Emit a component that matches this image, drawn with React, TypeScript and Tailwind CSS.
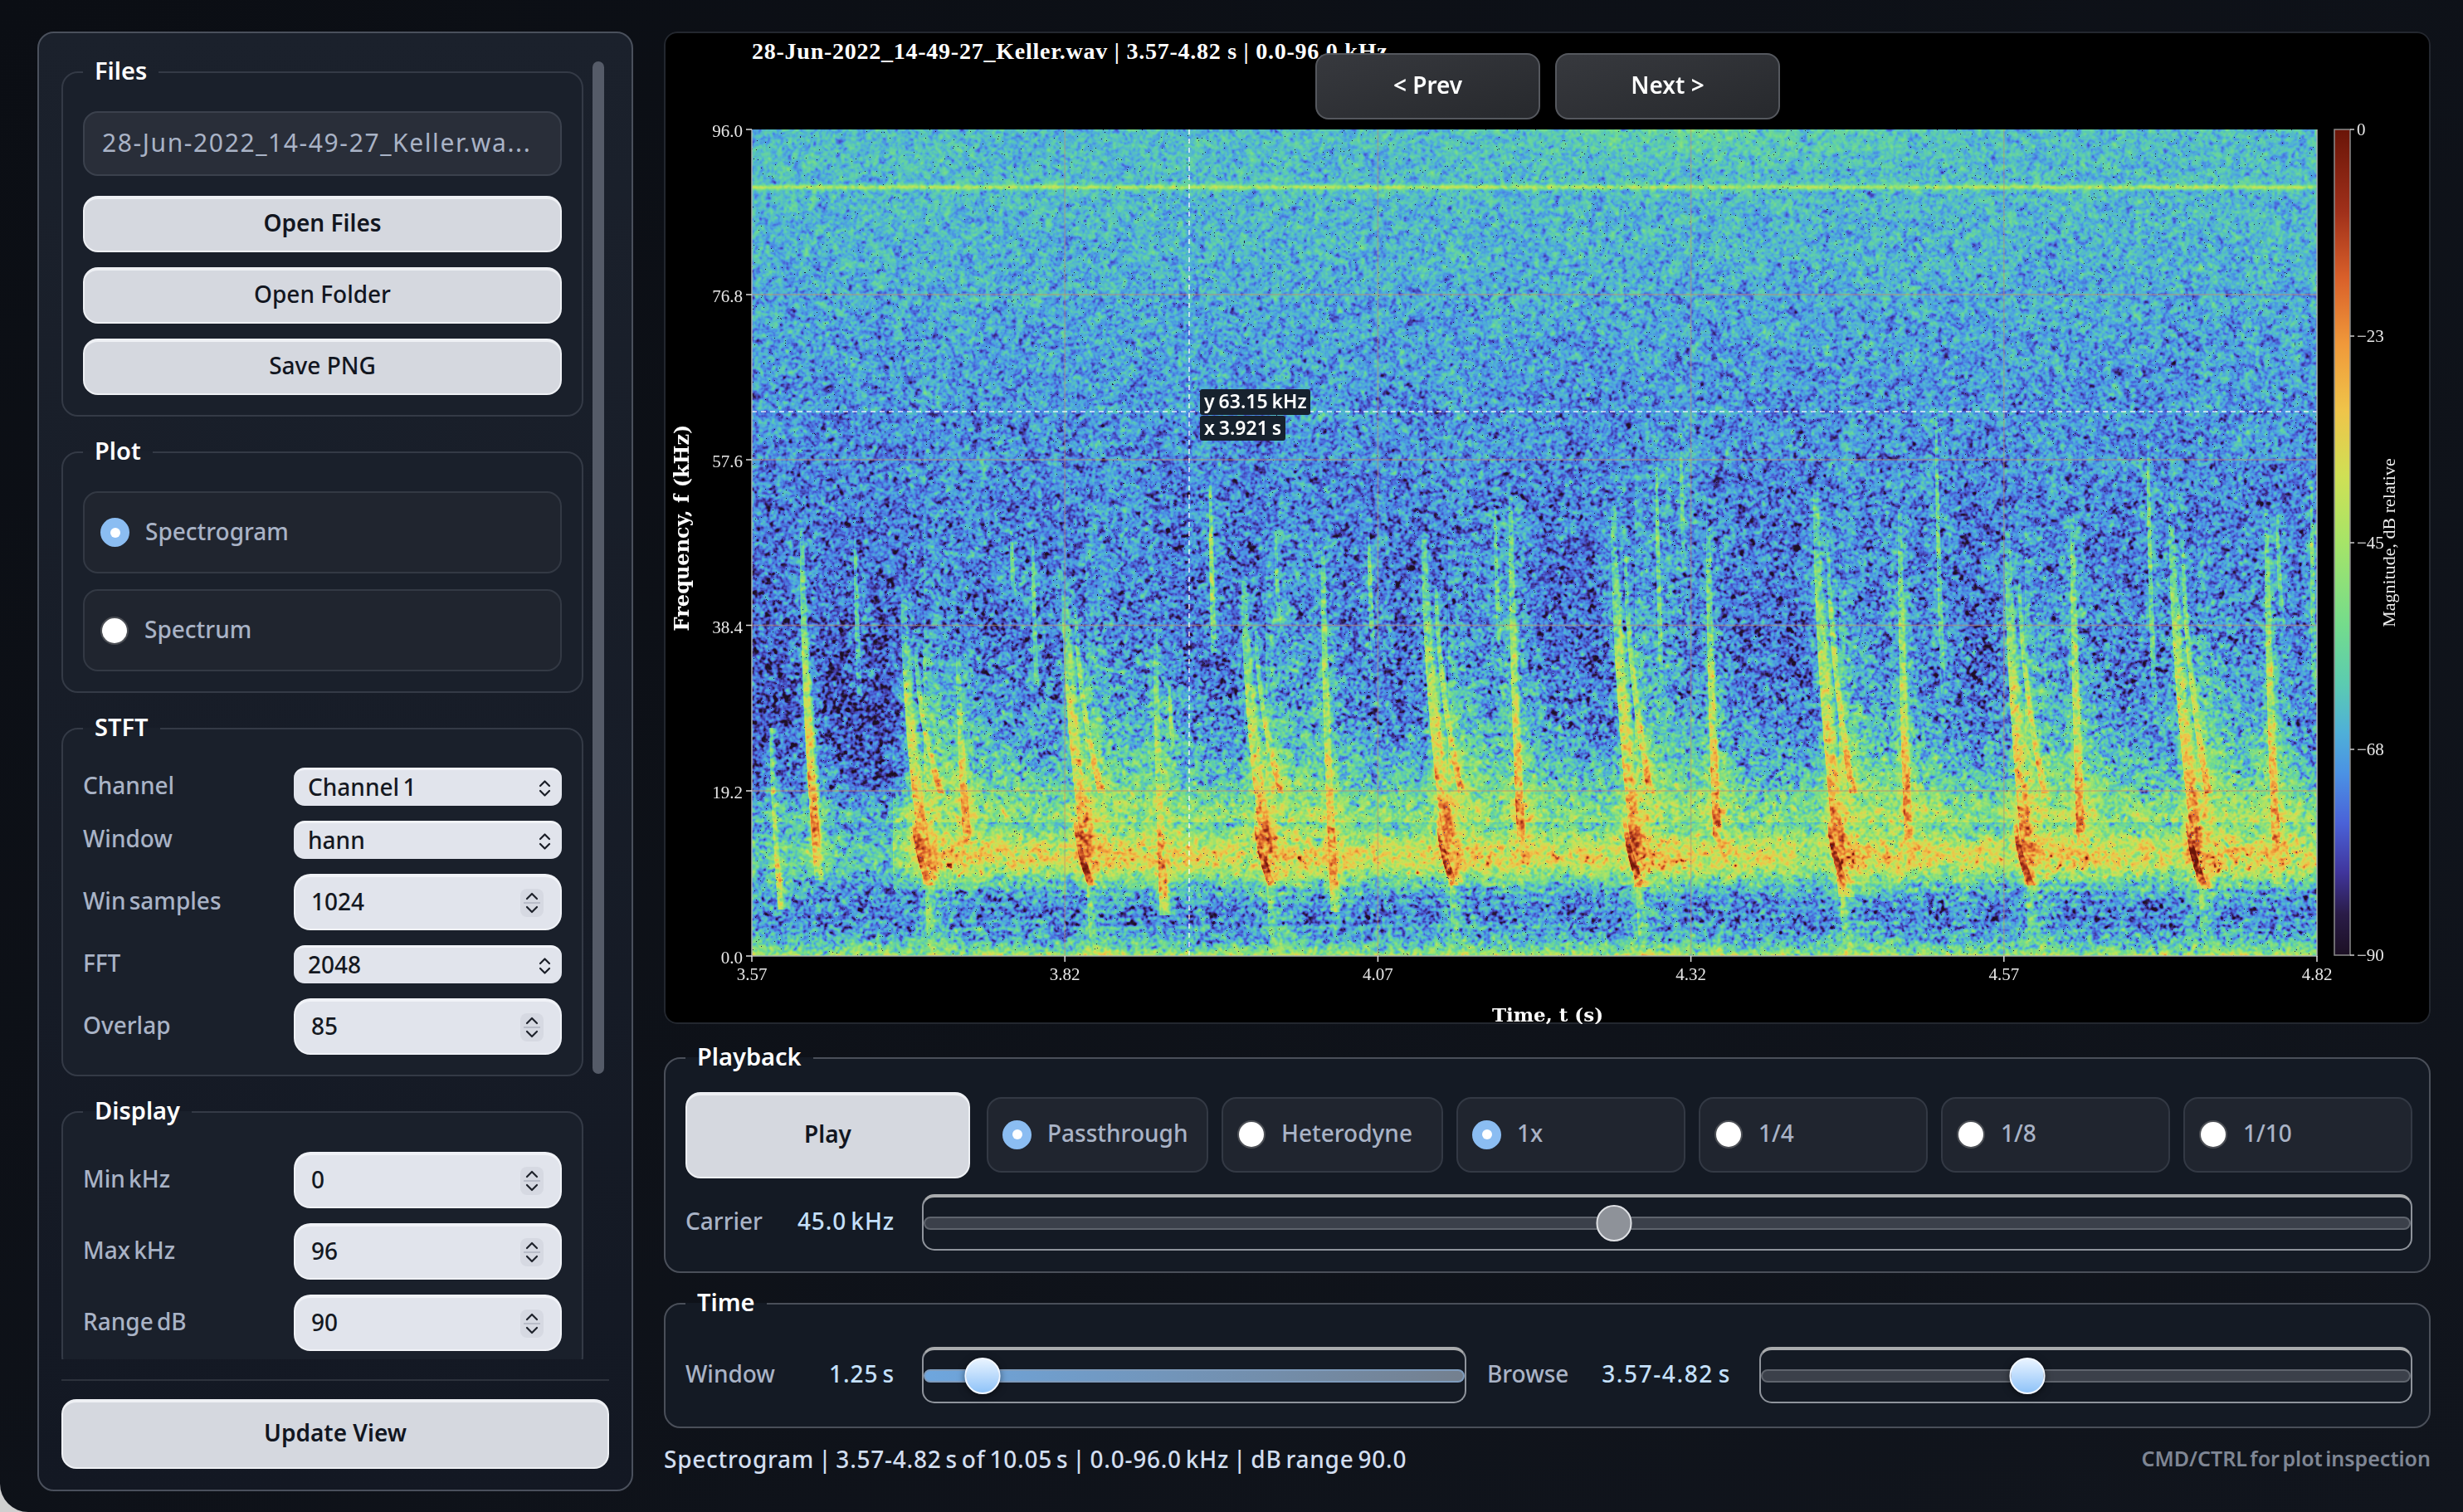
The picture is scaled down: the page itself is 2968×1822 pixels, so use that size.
import React, { useEffect, useRef } from 'react';

const W = 1886;
const H = 996;

// plot corners inside the black panel (panel sits at 800,38 on the page)
const PX = 106;
const PY = 118;

const COLORS: [number, string][] = [
  [0, '#1c1024'],
  [0.05, '#2a1c48'],
  [0.1, '#40359c'],
  [0.16, '#4a62d8'],
  [0.22, '#4b92e4'],
  [0.27, '#4fb0d8'],
  [0.33, '#5cccb0'],
  [0.4, '#74dc8c'],
  [0.5, '#a6e468'],
  [0.58, '#cfe055'],
  [0.66, '#efc44a'],
  [0.74, '#f0993a'],
  [0.82, '#d9602a'],
  [0.9, '#a0301a'],
  [1, '#6a1508'],
];

const hexRgb = (h: string) => [parseInt(h.slice(1, 3), 16), parseInt(h.slice(3, 5), 16), parseInt(h.slice(5, 7), 16)];

const buildLut = () => {
  const lut = new Uint8Array(1024 * 3);
  for (let i = 0; i < 1024; i++) {
    const t = i / 1023;
    let k = 0;
    while (k < COLORS.length - 2 && COLORS[k + 1][0] < t) k++;
    const [t0, c0] = COLORS[k];
    const [t1, c1] = COLORS[k + 1];
    const u = Math.min(1, Math.max(0, (t - t0) / (t1 - t0)));
    const a = hexRgb(c0);
    const b = hexRgb(c1);
    for (let c = 0; c < 3; c++) lut[i * 3 + c] = a[c] + (b[c] - a[c]) * u;
  }
  return lut;
};

const makeRng = (seed: number) => () => {
  seed |= 0;
  seed = (seed + 0x6d2b79f5) | 0;
  let t = Math.imul(seed ^ (seed >>> 15), 1 | seed);
  t = (t + Math.imul(t ^ (t >>> 7), 61 | t)) ^ t;
  return ((t ^ (t >>> 14)) >>> 0) / 4294967296;
};

const boxBlur = (a: Float32Array, r: number, passes: number) => {
  const b = new Float32Array(W * H);
  const win = r * 2 + 1;
  for (let pass = 0; pass < passes; pass++) {
    for (let y = 0; y < H; y++) {
      let s = 0;
      const o = y * W;
      for (let x = -r; x <= r; x++) s += a[o + Math.max(0, x)];
      for (let x = 0; x < W; x++) {
        b[o + x] = s / win;
        s += a[o + Math.min(W - 1, x + r + 1)] - a[o + Math.max(0, x - r)];
      }
    }
    for (let x = 0; x < W; x++) {
      let s = 0;
      for (let y = -r; y <= r; y++) s += b[Math.max(0, y) * W + x];
      for (let y = 0; y < H; y++) {
        a[y * W + x] = s / win;
        s += b[Math.min(H - 1, y + r + 1) * W + x] - b[Math.max(0, y - r) * W + x];
      }
    }
  }
  return a;
};

const blurred = (rng: () => number, r: number) => {
  const a = new Float32Array(W * H);
  for (let i = 0; i < a.length; i++) a[i] = rng() - 0.5;
  boxBlur(a, r, 2);
  let sum = 0;
  for (let i = 0; i < a.length; i++) sum += a[i] * a[i];
  const std = Math.sqrt(sum / a.length);
  for (let i = 0; i < a.length; i++) a[i] /= std;
  return a;
};

const piecewise = (pts: number[][], v: number) => {
  if (v <= pts[0][0]) return pts[0][1];
  for (let i = 1; i < pts.length; i++) {
    if (v <= pts[i][0]) {
      const u = (v - pts[i - 1][0]) / (pts[i][0] - pts[i - 1][0]);
      return pts[i - 1][1] + (pts[i][1] - pts[i - 1][1]) * u;
    }
  }
  return pts[pts.length - 1][1];
};

const even = (lv: number[], s: number) => {
  const p = Math.min(0.9999, Math.max(0, s)) * (lv.length - 1);
  const i = Math.floor(p);
  return lv[i] + (lv[i + 1] - lv[i]) * (p - i);
};

const FLOOR = [
  [0, 0.3], [60, 0.295], [150, 0.28], [300, 0.24], [400, 0.215], [500, 0.19], [600, 0.16],
  [720, 0.135], [800, 0.14], [860, 0.19], [900, 0.24], [950, 0.21], [975, 0.28], [990, 0.41], [996, 0.54],
];

// call tracks, in page pixels: xTop, yTop, xBottom, yBottom
const MAIN = [
  [1086, 720, 1113, 1065, 0.85],
  [1279, 680, 1308, 1060, 0.9],
  [1496, 700, 1525, 1060, 0.9],
  [1713, 650, 1745, 1062, 0.92],
  [1941, 610, 1970, 1068, 0.95],
  [2185, 590, 2216, 1080, 0.95],
  [2416, 640, 2440, 1065, 0.92],
  [2613, 600, 2648, 1070, 1],
];
const STRONG = [
  [964, 640, 982, 1059], [1152, 774, 1162, 1031], [1390, 758, 1398, 1102], [1592, 660, 1604, 1098],
  [1818, 601, 1830, 1047], [2056, 622, 2066, 1047], [2287, 618, 2296, 1039], [2495, 622, 2504, 1047],
  [2729, 618, 2740, 1064],
];
const THIN = [
  [1029, 640, 1033, 838, 0.36], [1112, 774, 1116, 880, 0.36], [1217, 640, 1219, 716, 0.38], [1243, 640, 1248, 860, 0.36],
  [1408, 826, 1412, 916, 0.46], [1457, 585, 1460, 786, 0.48], [1536, 640, 1540, 776, 0.38], [1648, 640, 1652, 790, 0.42],
  [1800, 610, 1806, 800, 0.38], [1995, 563, 2000, 837, 0.44], [2024, 520, 2028, 720, 0.35], [2332, 500, 2340, 858, 0.42],
  [2587, 525, 2594, 860, 0.42], [2743, 620, 2748, 760, 0.4], [2784, 587, 2786, 850, 0.4],
];

const drawSpectrogram = (canvas: HTMLCanvasElement) => {
  const ctx = canvas.getContext('2d');
  if (!ctx) return;
  const rng = makeRng(20220628);
  const coarse = blurred(rng, 2);
  const fine = blurred(rng, 1);
  const n1 = new Float32Array(W * H);
  for (let i = 0; i < n1.length; i++) n1[i] = 0.55 * coarse[i] + 0.7 * fine[i];
  const ridge = new Float32Array(W * H);

  const stamp = (x0: number, y0: number, x1: number, y1: number, w0: number, w1: number, plat: number, lv: number[]) => {
    const top = Math.max(0, Math.round(y0 - 156));
    const bot = Math.min(H - 1, Math.round(y1 - 156));
    for (let y = top; y <= bot; y++) {
      const s = (y - top) / Math.max(1, bot - top);
      // sweeps run almost upright at the top and lean over near the bottom
      const cx = x0 - 906 + (x1 - x0) * Math.pow(s, 1.8);
      const lev = even(lv, s);
      const wid = w0 + (w1 - w0) * s;
      const pl = plat * (0.4 + 0.6 * s);
      const xa = Math.max(0, Math.floor(cx - 5));
      const xb = Math.min(W - 1, Math.ceil(cx + pl + wid * 4));
      for (let x = xa; x <= xb; x++) {
        const dx = x - cx;
        const r = lev * (dx < 0 ? Math.exp(-(dx * dx) / 3) : dx < pl ? 1 : Math.exp(-(dx - pl) / wid));
        const i = y * W + x;
        if (r > ridge[i]) ridge[i] = r;
      }
    }
  };

  for (const [x0, y0, x1, y1, k] of MAIN) {
    stamp(x0 + 6, y0 + 130, x1 + 4, y1, 14, 66, 0, [0.34, 0.42, 0.47, 0.52]);
    stamp(x0, y0, x1, y1, 4, 20, 13, [0.3, 0.34, 0.42, 0.5, 0.56, 0.6, 0.68, 0.8, 0.62]);
    stamp(x0 + 16, y0 + 60, x0 + 44, 955, 3, 10, 6, [0.32, 0.42, 0.5, 0.58, 0.74]);
    stamp(x1 + 2, y1 - 5, x1 + 6, 1150, 14, 14, 8, [0.5, 0.42, 0.39, 0.41]);
    // dark core at the bottom of the sweep
    stamp(x1 - 14, 985, x1 + 3, 1066, 5, 7, 8, [0.55, 0.8, 0.95 * k, 0.98 * k, 0.7]);
    // reverberant tail around 11 kHz
    for (let y = 1000 - 156; y < 1070 - 156; y++) {
      const dy = (y - (1036 - 156)) / 26;
      for (let x = Math.max(0, x1 - 906); x < Math.min(W, x1 - 906 + 200); x++) {
        const dx = x - (x1 - 906);
        const lev = (0.4 + 0.34 * k * Math.exp(-dx / 45)) * Math.exp(-dy * dy) + 0.1 * n1[y * W + x];
        const i = y * W + x;
        if (lev > ridge[i]) ridge[i] = lev;
      }
    }
  }
  for (const [x0, y0, x1, y1] of STRONG) {
    stamp(x0, y0, x1, y1, 4, 8, 9, [0.32, 0.38, 0.43, 0.48, 0.54, 0.6, 0.7, 0.76, 0.48]);
  }
  stamp(928, 877, 938, 1095, 6, 8, 5, [0.36, 0.42, 0.46, 0.5, 0.56, 0.66, 0.5]);
  for (const [x0, y0, x1, y1, l] of THIN) {
    stamp(x0, y0, x1, y1, 2.5, 3.5, 5, [l * 0.75, l, l, l * 0.9, l * 0.65]);
  }

  const halo = boxBlur(ridge.slice(), 10, 2);

  const lut = buildLut();
  const img = ctx.createImageData(W, H);
  const mains = MAIN.map((m) => m[2] - 906);
  const px = img.data;
  for (let y = 0; y < H; y++) {
    const base = piecewise(FLOOR, y);
    const amp = 0.038 + 0.032 * Math.min(1, y / 650);
    const dyBand = y - 875;
    const g = Math.exp(-(dyBand * dyBand) / (dyBand < 0 ? 2500 : 900));
    for (let x = 0; x < W; x++) {
      let last = -1;
      for (let m = 0; m < mains.length; m++) if (mains[m] <= x) last = mains[m];
      const e = last < 0 ? 0 : Math.exp(-(x - last) / 150);
      const a = x < 170 ? 0.35 : 1;
      const bandLevel = a === 1 ? 0.47 + 0.06 * e : 0.33;
      let l = base + (bandLevel - base) * g;
      const d = 835 - y;
      if (d > 0) {
        const g2 = Math.exp(-d / (40 + 150 * e));
        l += (0.46 - l) * g2 * a;
      }
      if (y > 905 && y < 968) l += 0.035 * Math.sin(y * 0.62 + x * 0.004) * (0.4 + e);
      if (y < 60) {
        const dx = (x - 1160) / 220;
        l += 0.06 * Math.exp(-dx * dx) * (1 - y / 60);
      }
      const ly = y - 69;
      l += 0.22 * Math.exp(-(ly * ly) / 8);
      const i = y * W + x;
      l += 0.3 * halo[i];
      let n = n1[i];
      if (n < 0) n *= 1.3;
      l += n * amp;
      const r = ridge[i] + 0.07 * n;
      if (r > l) l = r;
      const u = rng();
      if (u < 0.005) l *= 0.12;
      const c = Math.round(Math.min(1, Math.max(0, l)) * 1023) * 3;
      const o = i * 4;
      px[o] = lut[c];
      px[o + 1] = lut[c + 1];
      px[o + 2] = lut[c + 2];
      px[o + 3] = 255;
    }
  }
  ctx.putImageData(img, 0, 0);
};

const Group: React.FC<{ title: string; className?: string; children: React.ReactNode }> = ({ title, className = '', children }) => (
  <fieldset className={`rounded-[20px] border-2 border-[#343a46] ${className}`}>
    <legend className="px-[14px] pb-[4px] text-[29px] leading-[24px] font-semibold text-white">{title}</legend>
    {children}
  </fieldset>
);

const LightButton: React.FC<{ label: string; bold?: boolean; className?: string }> = ({ label, bold, className = '' }) => (
  <button className={`rounded-[18px] border-2 border-t-[4px] border-[#eef0f4] bg-[#d5d8df] pb-[6px] text-[28px] text-[#12161f] ${bold ? 'font-semibold' : 'font-medium'} ${className}`}>
    {label}
  </button>
);

const Chevrons = () => (
  <svg width="15" height="22" viewBox="0 0 15 22" fill="none" stroke="#1a1e27" strokeWidth="2.2" strokeLinecap="round" strokeLinejoin="round">
    <path d="M2 8 L7.5 2.5 L13 8" />
    <path d="M2 14 L7.5 19.5 L13 14" />
  </svg>
);

const Label: React.FC<{ text: string }> = ({ text }) => <span className="pb-[4px] text-[28px] font-medium text-[#a9b3c6]">{text}</span>;

const SelectRow: React.FC<{ label: string; value: string }> = ({ label, value }) => (
  <div className="flex items-center justify-between">
    <Label text={label} />
    <div className="flex h-[46px] w-[323px] items-center justify-between rounded-[13px] border-t-[3px] border-[#f1f3f8] bg-[#e1e4ec] pr-[13px] pl-[17px] text-[28px] font-medium text-[#141821]">
      <span className="pb-[4px]">{value}</span>
      <Chevrons />
    </div>
  </div>
);

const NumberRow: React.FC<{ label: string; value: string }> = ({ label, value }) => (
  <div className="flex items-center justify-between">
    <Label text={label} />
    <div className="flex h-[68px] w-[323px] items-center justify-between rounded-[20px] border-2 border-t-[4px] border-[#f0f2f7] bg-[#e1e4ec] pr-[20px] pl-[19px] text-[28px] font-medium text-[#141821]">
      <span className="pb-[4px]">{value}</span>
      <div className="flex h-[34px] w-[28px] flex-col items-center justify-between rounded-[8px] bg-[#d6d9e2] py-[4px]">
        <svg width="16" height="10" viewBox="0 0 16 10" fill="none" stroke="#1f232c" strokeWidth="2.2" strokeLinecap="round" strokeLinejoin="round">
          <path d="M2 8 L8 2 L14 8" />
        </svg>
        <div className="h-[2px] w-[20px] bg-[#b8bcc8]" />
        <svg width="16" height="10" viewBox="0 0 16 10" fill="none" stroke="#1f232c" strokeWidth="2.2" strokeLinecap="round" strokeLinejoin="round">
          <path d="M2 2 L8 8 L14 2" />
        </svg>
      </div>
    </div>
  </div>
);

const Radio: React.FC<{ on?: boolean }> = ({ on }) =>
  on ? (
    <span className="flex h-[35px] w-[35px] shrink-0 items-center justify-center rounded-full bg-[#8bbdf2]">
      <span className="h-[12px] w-[12px] rounded-full bg-white" />
    </span>
  ) : (
    <span className="h-[34px] w-[34px] shrink-0 rounded-full border-2 border-[#4c4f55] bg-white" />
  );

const RadioCard: React.FC<{ label: string; on?: boolean; className?: string; pad?: string }> = ({ label, on, className = '', pad = 'pl-[17px]' }) => (
  <div className={`flex items-center gap-[19px] rounded-[18px] border-2 border-[#333944] bg-[#20252f] ${pad} ${className}`}>
    <Radio on={on} />
    <span className="pb-[4px] text-[28px] font-medium text-[#a9b3c6]">{label}</span>
  </div>
);

const Slider: React.FC<{ pos: number; className?: string; tone: 'gray' | 'blue'; filled?: boolean }> = ({ pos, className = '', tone, filled }) => (
  <div className={`relative flex h-[68px] items-center rounded-[15px] border-2 border-t-[4px] border-[#8f949c] border-t-[#a9abad] ${className}`}>
    <div className={`h-[16px] w-full rounded-full border-2 ${filled ? 'border-[#7f9cbd] bg-gradient-to-r from-[#6ea6de] to-[#74808f]' : 'border-[#5f646d] bg-[#3b404a]'}`} />
    <div
      className={`absolute top-[9px] h-[44px] w-[43px] -translate-x-1/2 rounded-full border-2 ${
        tone === 'blue'
          ? 'border-[#f2f7ff] bg-gradient-to-b from-[#e8f3ff] to-[#8fc3f8] shadow-[0_2px_8px_rgba(0,0,0,0.5)]'
          : 'border-[#dfe1e5] bg-[#8e9299]'
      }`}
      style={{ left: pos }}
    />
  </div>
);

const YTICKS: [string, number][] = [['96.0', 0], ['76.8', 199], ['57.6', 398], ['38.4', 597.5], ['19.2', 797], ['0.0', 996]];
const XTICKS: [string, number][] = [['3.57', 0], ['3.82', 377.2], ['4.07', 754.4], ['4.32', 1131.6], ['4.57', 1508.8], ['4.82', 1886]];
const CTICKS: [string, number][] = [['0', 0], ['−23', 249], ['−45', 498], ['−68', 747], ['−90', 995]];

const PlotPanel = () => {
  const ref = useRef<HTMLCanvasElement>(null);

  useEffect(() => {
    if (ref.current) drawSpectrogram(ref.current);
  }, []);

  return (
    <div className="relative h-[1196px] overflow-hidden rounded-[16px] bg-black shadow-[inset_0_0_0_2px_#23272f]">
      <div className="absolute top-[8px] left-[106px] font-['Liberation_Serif',serif] text-[28px] leading-[32px] font-bold tracking-[0.75px] whitespace-nowrap text-white [word-spacing:0]">
        28-Jun-2022_14-49-27_Keller.wav | 3.57-4.82 s | 0.0-96.0 kHz
      </div>

      <canvas ref={ref} width={W} height={H} className="absolute top-[118px] left-[106px] block h-[996px] w-[1886px]" />

      <svg width="2129" height="1196" className="absolute inset-0 font-['Liberation_Serif',serif] [word-spacing:0]">
        <defs>
          <linearGradient id="cbar" x1="0" y1="1" x2="0" y2="0">
            {COLORS.map(([t, c]) => (
              <stop key={t} offset={t} stopColor={c} />
            ))}
          </linearGradient>
        </defs>

        <g transform={`translate(${PX} ${PY})`}>
          {YTICKS.slice(1, 5).map(([l, y]) => (
            <line key={l} x1="0" x2={W} y1={y} y2={y} stroke="#c09070" strokeOpacity="0.6" strokeWidth="1.5" />
          ))}
          {XTICKS.slice(1, 5).map(([l, x]) => (
            <line key={l} x1={x} x2={x} y1="0" y2={H} stroke="#c09070" strokeOpacity="0.5" strokeWidth="1.5" />
          ))}
          <line x1="527" x2="527" y1="0" y2={H} stroke="#fff" strokeWidth="1.5" strokeDasharray="6 5" strokeOpacity="0.85" />
          <line x1="0" x2={W} y1="340" y2="340" stroke="#fff" strokeWidth="1.5" strokeDasharray="6 5" strokeOpacity="0.85" />
          <path d={`M0 0 V${H} H${W} V0`} fill="none" stroke="#a9b4b4" strokeWidth="1.5" />

          {YTICKS.map(([l, y]) => (
            <g key={l}>
              <line x1="-7" x2="0" y1={y} y2={y} stroke="#ddd" strokeWidth="1.5" />
              <text x="-11" y={y + 9} textAnchor="end" fontSize="21" fill="#e8e8e8">{l}</text>
            </g>
          ))}
          {XTICKS.map(([l, x]) => (
            <g key={l}>
              <line x1={x} x2={x} y1={H} y2={H + 7} stroke="#ddd" strokeWidth="1.5" />
              <text x={x} y={H + 29} textAnchor="middle" fontSize="21" fill="#e8e8e8">{l}</text>
            </g>
          ))}
        </g>

        <text x="1065" y="1193" textAnchor="middle" fontSize="23" fontWeight="700" fill="#fff" className="font-['DejaVu_Serif',serif]">Time, t (s)</text>
        <text transform="translate(30 598) rotate(-90)" textAnchor="middle" fontSize="24" fontWeight="700" fill="#fff" className="font-['DejaVu_Serif',serif]">Frequency, f (kHz)</text>

        <g transform="translate(2013 118)">
          <rect x="0" y="0" width="19" height="995" fill="url(#cbar)" stroke="#8a8a8a" strokeWidth="1.5" />
          {CTICKS.map(([l, y]) => (
            <g key={l}>
              <line x1="19" x2="24" y1={y} y2={y} stroke="#ccc" strokeWidth="1.5" />
              <text x="27" y={y + 7} fontSize="21" fill="#e8e8e8">{l}</text>
            </g>
          ))}
          <text transform="translate(73 498) rotate(-90)" textAnchor="middle" fontSize="22" fill="#eee">Magnitude, dB relative</text>
        </g>
      </svg>

      {/* crosshair readout */}
      <div className="absolute top-[431px] left-[646px] flex h-[31px] w-[133px] items-center rounded-[3px] bg-[#17222e] pb-[2px] pl-[5px] text-[23px] font-semibold whitespace-nowrap text-white [word-spacing:-1px]">y 63.15 kHz</div>
      <div className="absolute top-[463px] left-[646px] flex h-[30px] w-[103px] items-center rounded-[3px] bg-[#17222e] pb-[2px] pl-[5px] text-[23px] font-semibold whitespace-nowrap text-white [word-spacing:-1px]">x 3.921 s</div>

      {/* nav buttons sit over the plot title */}
      <div className="absolute top-[26px] left-[785px] flex gap-[18px]">
        {['< Prev', 'Next >'].map((t) => (
          <button key={t} className="h-[80px] w-[271px] rounded-[16px] border-2 border-[#55585e] bg-gradient-to-br from-[#37393e] to-[#27292d] pb-[4px] text-[28px] font-semibold text-white">
            {t}
          </button>
        ))}
      </div>
    </div>
  );
};

const App = () => {
  return (
    <div className="h-[1822px] w-[2968px] overflow-hidden bg-[#cfcfcf] font-['Noto_Sans',sans-serif] [word-spacing:-3px]">
      <div className="flex h-full gap-[37px] rounded-bl-[34px] bg-gradient-to-br from-[#0b0e14] to-[#11151d] pt-[38px] pr-[39px] pl-[45px]">
        {/* left column */}
        <aside className="flex h-[1759px] w-[718px] shrink-0 flex-col rounded-[20px] border-2 border-[#4a505c] bg-gradient-to-b from-[#1b212c] to-[#131823] px-[27px] pt-[33px]">
          <div className="flex h-[1565px] shrink-0 gap-[11px] overflow-hidden">
            <div className="flex w-[629px] shrink-0 flex-col gap-[29px]">
              <Group title="Files" className="bg-[#1a202b] px-[24px] pb-[24px]">
                <div className="mt-[33px] flex h-[78px] items-center rounded-[18px] border-2 border-[#3b414d] bg-[#292e39] pb-[4px] pl-[21px] text-[30px] tracking-[1.6px] text-[#a9b3c6]">
                  28-Jun-2022_14-49-27_Keller.wa...
                </div>
                <div className="mt-[24px] flex flex-col gap-[18px]">
                  <LightButton label="Open Files" bold className="h-[68px]" />
                  <LightButton label="Open Folder" className="h-[68px]" />
                  <LightButton label="Save PNG" className="h-[68px]" />
                </div>
              </Group>

              <Group title="Plot" className="bg-[#1a202b] px-[24px] pb-[24px]">
                <div className="mt-[33px] flex flex-col gap-[19px]">
                  <RadioCard label="Spectrogram" on className="h-[99px]" pad="pl-[19px]" />
                  <RadioCard label="Spectrum" className="h-[99px]" pad="pl-[19px]" />
                </div>
              </Group>

              <Group title="STFT" className="bg-[#1a202b] px-[24px] pb-[24px]">
                <div className="mt-[33px] flex flex-col gap-[18px]">
                  <SelectRow label="Channel" value="Channel 1" />
                  <SelectRow label="Window" value="hann" />
                  <NumberRow label="Win samples" value="1024" />
                  <SelectRow label="FFT" value="2048" />
                  <NumberRow label="Overlap" value="85" />
                </div>
              </Group>

              <Group title="Display" className="bg-[#1a202b] px-[24px] pb-[24px]">
                <div className="mt-[34px] flex flex-col gap-[18px]">
                  <NumberRow label="Min kHz" value="0" />
                  <NumberRow label="Max kHz" value="96" />
                  <NumberRow label="Range dB" value="90" />
                </div>
              </Group>
            </div>
            <div className="mt-[1px] h-[1220px] w-[14px] shrink-0 rounded-full bg-[#555b68]" />
          </div>

          <div className="mt-[24px] h-[2px] bg-[#2d323c]" />
          <LightButton label="Update View" bold className="mt-[22px] h-[84px] w-full" />
        </aside>

        {/* right column */}
        <main className="flex w-[2129px] shrink-0 flex-col">
          <PlotPanel />

          <Group title="Playback" className="mt-[27px] bg-[#141a24] pr-[20px] pb-[25px] pl-[24px] !border-[#4a4f59]">
            <div className="mt-[27px] flex items-center">
              <LightButton label="Play" bold className="h-[104px] w-[343px] shrink-0" />
              <div className="ml-[20px] flex flex-1 gap-[16px] pb-[2px]">
                <RadioCard label="Passthrough" on className="h-[91px] w-[267px] shrink-0" />
                <RadioCard label="Heterodyne" className="h-[91px] w-[267px] shrink-0" />
                <RadioCard label="1x" on className="h-[91px] flex-1" />
                <RadioCard label="1/4" className="h-[91px] flex-1" />
                <RadioCard label="1/8" className="h-[91px] flex-1" />
                <RadioCard label="1/10" className="h-[91px] flex-1" />
              </div>
            </div>
            <div className="mt-[19px] flex items-center">
              <div className="flex w-[252px] shrink-0 items-center justify-between">
                <Label text="Carrier" />
                <span className="pb-[4px] text-[28px] font-medium tracking-[0.9px] text-[#c5e0fb]">45.0 kHz</span>
              </div>
              <Slider pos={832} tone="gray" className="ml-[33px] flex-1" />
            </div>
          </Group>

          <Group title="Time" className="mt-[23px] bg-[#141a24] pr-[20px] pb-[28px] pl-[24px] !border-[#4a4f59]">
            <div className="mt-[38px] flex items-center">
              <div className="flex w-[252px] shrink-0 items-center justify-between">
                <Label text="Window" />
                <span className="pb-[4px] text-[28px] font-medium tracking-[0.9px] text-[#c5e0fb]">1.25 s</span>
              </div>
              <Slider pos={71} tone="blue" filled className="ml-[33px] w-[656px] shrink-0" />
              <div className="ml-[25px] flex w-[294px] shrink-0 items-center justify-between">
                <Label text="Browse" />
                <span className="pb-[4px] text-[28px] font-medium tracking-[1.6px] text-[#c5e0fb]">3.57-4.82 s</span>
              </div>
              <Slider pos={321} tone="blue" className="ml-[34px] flex-1" />
            </div>
          </Group>

          <div className="mt-[21px] flex h-[36px] items-center justify-between">
            <span className="pb-[4px] text-[28px] font-medium tracking-[0.75px] text-[#d2def0]">Spectrogram | 3.57-4.82 s of 10.05 s | 0.0-96.0 kHz | dB range 90.0</span>
            <span className="pb-[4px] text-[25px] font-semibold text-[#7f8694]">CMD/CTRL for plot inspection</span>
          </div>
        </main>
      </div>
    </div>
  );
};

export default App;
